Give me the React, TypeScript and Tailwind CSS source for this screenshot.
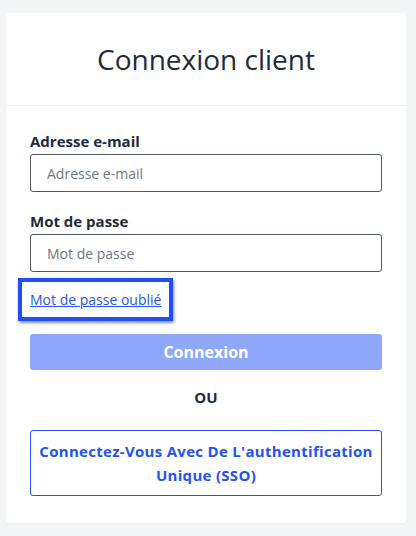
import { FC } from 'react'

const App: FC = () => {
    return (
        <div className="min-h-[536px] w-[416px] bg-[#f3f5f6] pt-[13px] pl-[6px] pr-[10px] pb-[13px]" style={{ fontFamily: '"Open Sans", Lato, sans-serif' }}>
            <div className="bg-white rounded-[4px] shadow-[0_1px_2px_rgba(0,0,0,0.04)]">
                <div className="h-[93px] flex items-center justify-center border-b border-[#eceef0]">
                    <h1 className="text-[28px] text-[#1d2b3d]">Connexion client</h1>
                </div>
                <div className="px-[24px] pt-[25px] pb-[27px] flex flex-col">
                    <label className="text-[15px] font-bold text-[#1d2b3d] leading-[20px]" htmlFor="email">
                        Adresse e-mail
                    </label>
                    <input
                        id="email"
                        className="mt-[3px] h-[38px] w-full border border-[#4d5a6a] rounded-[3px] px-[16px] text-[14px] placeholder:text-[#6b7785] outline-none"
                        placeholder="Adresse e-mail"
                    />
                    <label className="mt-[19px] text-[15px] font-bold text-[#1d2b3d] leading-[20px]" htmlFor="password">
                        Mot de passe
                    </label>
                    <input
                        id="password"
                        type="password"
                        className="mt-[3px] h-[38px] w-full border border-[#4d5a6a] rounded-[3px] px-[16px] text-[14px] placeholder:text-[#6b7785] outline-none"
                        placeholder="Mot de passe"
                    />
                    <div className="mt-[6px] -ml-[12px] self-start border-[4px] border-[#1f4ef5] px-[8px] py-[8px] shadow-[1px_2px_3px_rgba(0,0,0,0.45)]">
                        <a href="#" className="text-[14px] text-[#2657e8] underline leading-[19px] block">
                            Mot de passe oublié
                        </a>
                    </div>
                    <button className="mt-[13px] h-[36px] w-full rounded-[3px] bg-[#8fa8fb] text-white font-bold text-[16px]">
                        Connexion
                    </button>
                    <div className="mt-[17px] text-center text-[15px] font-bold text-[#1d2b3d] leading-[20px]">OU</div>
                    <button className="mt-[23px] w-full border border-[#2352f0] rounded-[3px] text-[#2352f0] font-bold text-[15px] leading-[24px] py-[8px] px-[8px] tracking-[0.3px]">
                        Connectez-Vous Avec De L'authentification Unique (SSO)
                    </button>
                </div>
            </div>
        </div>
    )
}

export default App
